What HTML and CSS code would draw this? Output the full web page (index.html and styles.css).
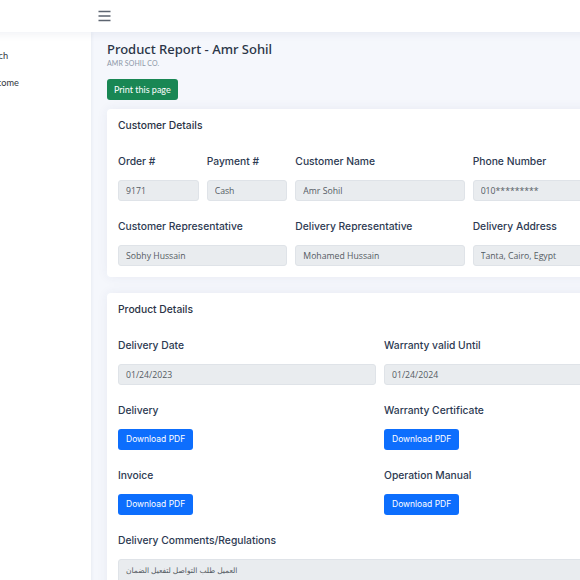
FILE: index.html
```html
<!DOCTYPE html>
<html lang="en">
<head>
    <meta charset="UTF-8">
    <meta name="viewport" content="width=device-width, initial-scale=1.0">
    <title>Product Report - Amr Sohil</title>
    <link rel="stylesheet" href="styles.css">
</head>
<body>
    <div class="layout">
        <!-- Topbar -->
        <header class="topbar">
            <button class="menu-toggle" aria-label="Menu">
                <svg width="13" height="12" viewBox="0 0 13 12">
                    <path d="M0.5 1.5h12M0.5 6h12M0.5 10.5h12" stroke="#5c6470" stroke-width="1.3" fill="none"/>
                </svg>
            </button>
        </header>

        <div class="body-row">
            <!-- Sidebar -->
            <aside class="sidebar">
                <a href="#" class="side-link">Search</a>
                <a href="#" class="side-link">Welcome</a>
            </aside>

            <main class="content">
                <h1 class="page-title">Product Report - Amr Sohil</h1>
                <p class="page-sub">AMR SOHIL CO.</p>
                <button class="btn btn-green" onclick="window.print()">Print this page</button>

                <section class="card">
                    <h2 class="card-title">Customer Details</h2>
                    <div class="grid">
                        <div class="field span-2">
                            <label>Order #</label>
                            <input type="text" value="9171" disabled>
                        </div>
                        <div class="field span-2">
                            <label>Payment #</label>
                            <input type="text" value="Cash" disabled>
                        </div>
                        <div class="field span-4">
                            <label>Customer Name</label>
                            <input type="text" value="Amr Sohil" disabled>
                        </div>
                        <div class="field span-4">
                            <label>Phone Number</label>
                            <input type="text" value="010*********" disabled>
                        </div>
                        <div class="field span-4">
                            <label>Customer Representative</label>
                            <input type="text" value="Sobhy Hussain" disabled>
                        </div>
                        <div class="field span-4">
                            <label>Delivery Representative</label>
                            <input type="text" value="Mohamed Hussain" disabled>
                        </div>
                        <div class="field span-4">
                            <label>Delivery Address</label>
                            <input type="text" value="Tanta, Cairo, Egypt" disabled>
                        </div>
                    </div>
                </section>

                <section class="card">
                    <h2 class="card-title">Product Details</h2>
                    <div class="grid">
                        <div class="field span-6">
                            <label>Delivery Date</label>
                            <input type="text" value="01/24/2023" disabled>
                        </div>
                        <div class="field span-6">
                            <label>Warranty valid Until</label>
                            <input type="text" value="01/24/2024" disabled>
                        </div>
                        <div class="field span-6">
                            <label>Delivery</label>
                            <div class="file-row"><a href="#" class="btn btn-blue">Download PDF</a></div>
                        </div>
                        <div class="field span-6">
                            <label>Warranty Certificate</label>
                            <div class="file-row"><a href="#" class="btn btn-blue">Download PDF</a></div>
                        </div>
                        <div class="field span-6">
                            <label>Invoice</label>
                            <div class="file-row"><a href="#" class="btn btn-blue">Download PDF</a></div>
                        </div>
                        <div class="field span-6">
                            <label>Operation Manual</label>
                            <div class="file-row"><a href="#" class="btn btn-blue">Download PDF</a></div>
                        </div>
                        <div class="field span-12">
                            <label>Delivery Comments/Regulations</label>
                            <textarea class="comments" rows="3" disabled>العميل طلب التواصل لتفعيل الضمان</textarea>
                        </div>
                    </div>
                </section>
            </main>
        </div>
    </div>
</body>
</html>
```

FILE: styles.css
```css
body {
    margin: 0;
    padding: 0;
    font-family: 'Lato', sans-serif;
    background: #f5f7fc;
    overflow: hidden;
}
.layout {
    display: flex;
    flex-direction: column;
    width: 800px;
    margin-left: -59px;
    min-height: 100vh;
}
.topbar {
    height: 32px;
    flex-shrink: 0;
    background: #fff;
    display: flex;
    align-items: center;
    padding-left: 157px;
    box-shadow: 0 2px 8px rgba(40, 60, 110, 0.07);
    z-index: 3;
}
.menu-toggle {
    background: none;
    border: none;
    padding: 0;
    display: flex;
    cursor: pointer;
}
.body-row {
    flex: 1;
    display: flex;
}
.sidebar {
    width: 150px;
    flex-shrink: 0;
    background: #fff;
    display: flex;
    flex-direction: column;
    gap: 16px;
    padding: 18px 0 0 40px;
    box-sizing: border-box;
    box-shadow: 1px 0 3px rgba(40, 60, 110, 0.06);
    z-index: 2;
}
.side-link {
    font-size: 9.2px;
    line-height: 11px;
    color: #2f3540;
    text-decoration: none;
}
.content {
    flex: 1;
    padding: 8px 16px 0 16px;
}
.page-title {
    margin: 0;
    font-family: 'Noto Sans', sans-serif;
    font-size: 13px;
    line-height: 18px;
    font-weight: 500;
    color: #2a3547;
}
.page-sub {
    margin: 0;
    font-size: 7px;
    line-height: 10px;
    color: #8d97a8;
    letter-spacing: 0.1px;
}
.btn {
    display: inline-block;
    border: none;
    border-radius: 3px;
    color: #fff;
    text-decoration: none;
    cursor: pointer;
    box-sizing: border-box;
}
.btn-green {
    margin-top: 11px;
    background: #198754;
    font-family: 'Lato', sans-serif;
    font-size: 9px;
    height: 21px;
    padding: 0 7px;
}
.btn-blue {
    background: #0d6efd;
    font-family: 'Inter', sans-serif;
    font-size: 8.5px;
    line-height: 21px;
    height: 21px;
    padding: 0 8px;
}
.file-row {
    display: flex;
}
.card {
    background: #fff;
    border-radius: 4px;
    margin-top: 9px;
    margin-bottom: 16px;
    padding: 8px 11px 11px 11px;
    box-shadow: 0 0 12px rgba(40, 60, 110, 0.07);
}
.card + .card {
    margin-top: 0;
}
.card-title {
    margin: 0 0 21px 0;
    font-family: 'Inter', sans-serif;
    font-size: 10.3px;
    line-height: 16px;
    font-weight: 500;
    color: #2b3346;
}
.grid {
    display: grid;
    grid-template-columns: repeat(12, 1fr);
    column-gap: 8px;
    row-gap: 18px;
    width: 524px;
}
.span-2 { grid-column: span 2; }
.span-4 { grid-column: span 4; }
.span-6 { grid-column: span 6; }
.span-12 { grid-column: span 12; }
.field label {
    display: block;
    margin-bottom: 12px;
    font-family: 'Inter', sans-serif;
    font-size: 10.3px;
    line-height: 14px;
    font-weight: 500;
    color: #2d3a52;
}
.field input,
.comments {
    display: block;
    width: 100%;
    height: 21px;
    box-sizing: border-box;
    padding: 0 7px;
    border: 1px solid #dfe3e8;
    border-radius: 3px;
    background: #e9ecef;
    font-family: 'Open Sans', 'DejaVu Sans', sans-serif;
    font-size: 8.7px;
    color: #545b63;
}
.comments {
    height: 50px;
    padding: 5px 7px;
    font-size: 7.5px;
    resize: none;
}
```
